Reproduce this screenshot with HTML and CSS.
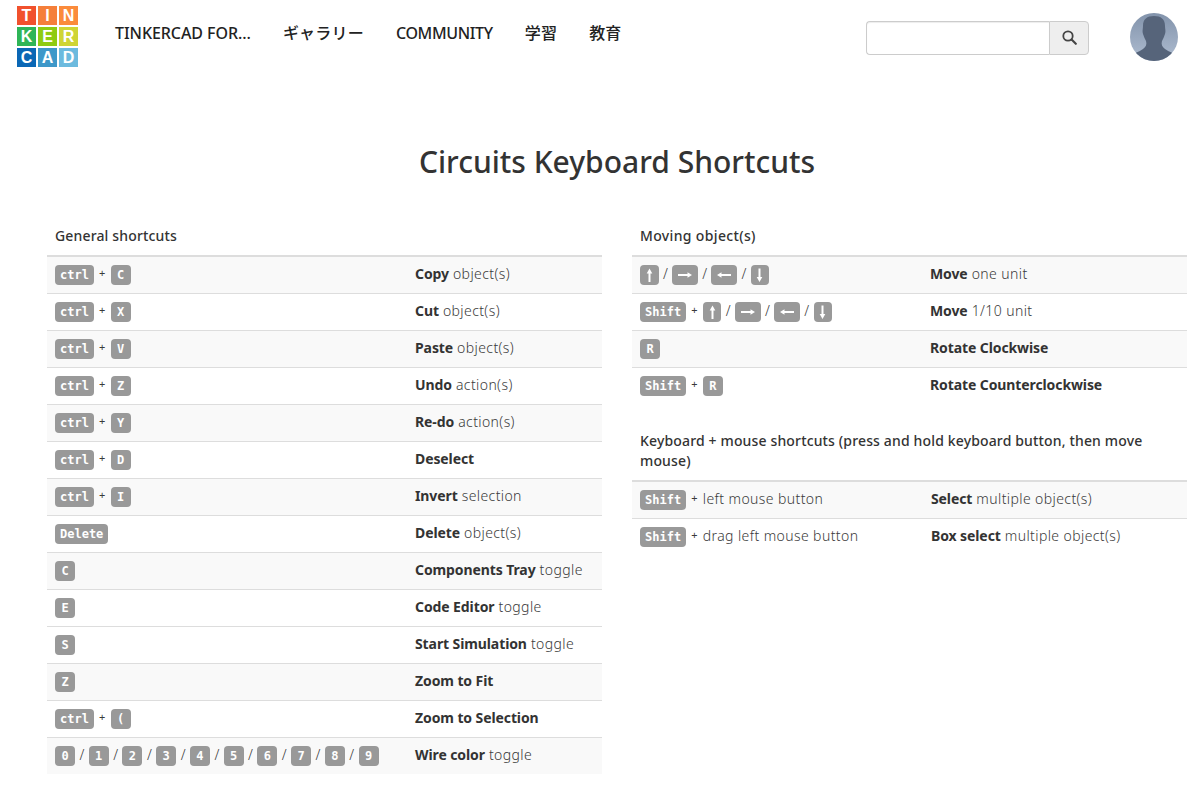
FILE: index.html
```html
<!DOCTYPE html>
<html lang="ja">
<head>
<meta charset="utf-8">
<title>Circuits Keyboard Shortcuts</title>
<link rel="stylesheet" href="styles.css">
</head>
<body>
<svg class="defs" width="0" height="0" aria-hidden="true">
  <symbol id="up" viewBox="0 0 7 20"><path d="M3.5 3.5L6.3 8.5H4.5V17H2.5V8.5H.7z" fill="#fff"/></symbol>
  <symbol id="down" viewBox="0 0 7 20"><path d="M3.5 17L6.3 12H4.5V3.5H2.5V12H.7z" fill="#fff"/></symbol>
  <symbol id="right" viewBox="0 0 14 20"><path d="M14 10L9.5 7.2V9H0V11H9.5V12.8z" fill="#fff"/></symbol>
  <symbol id="left" viewBox="0 0 14 20"><path d="M0 10L4.5 7.2V9H14V11H4.5V12.8z" fill="#fff"/></symbol>
</svg>
<header class="topbar">
  <a class="logo" href="#">
    <span class="t1">T</span><span class="t2">I</span><span class="t3">N</span>
    <span class="t4">K</span><span class="t5">E</span><span class="t6">R</span>
    <span class="t7">C</span><span class="t8">A</span><span class="t9">D</span>
  </a>
  <nav class="nav">
    <a class="first" href="#">TINKERCAD FOR...</a>
    <a class="cjk" href="#">ギャラリー</a>
    <a class="tight" href="#">COMMUNITY</a>
    <a class="cjk" href="#">学習</a>
    <a class="cjk" href="#">教育</a>
  </nav>
  <form class="search">
    <input class="search-input" type="text">
    <button class="search-btn" type="button" aria-label="search">
      <svg class="search-icon" width="15" height="15" viewBox="0 0 15 15"><circle cx="6" cy="6" r="4.7" fill="none" stroke="#444" stroke-width="1.8"/><path d="M9.6 9.6l4.2 4.2" stroke="#444" stroke-width="2.1" stroke-linecap="round"/></svg>
    </button>
  </form>
  <svg class="avatar" width="48" height="48" viewBox="0 0 48 48">
    <defs>
      <linearGradient id="bg" x1="0" y1="0" x2="0" y2="1"><stop offset="0" stop-color="#8293ab"/><stop offset="1" stop-color="#afbdd1"/></linearGradient>
      <clipPath id="cp"><circle cx="24" cy="24" r="24"/></clipPath>
    </defs>
    <g clip-path="url(#cp)">
      <rect width="48" height="48" fill="url(#bg)"/>
      <path d="M24 3c7 0 11 3 11 10 0 3 1 5 0 8-1 3-2 5-3 7-1 3 0 6 3 8 4 3 9 4 13 7v5H0v-5c4-3 9-4 13-7 3-2 4-5 3-8-1-2-2-4-3-7-1-3 0-5 0-8 0-7 4-10 11-10z" fill="#56647a"/>
    </g>
  </svg>
</header>

<main class="page">
  <h1 class="title">Circuits Keyboard Shortcuts</h1>
  <div class="columns">
    <section class="col">
      <table class="sc">
        <colgroup><col class="c-left"><col></colgroup>
        <thead><tr><th colspan="2">General shortcuts</th></tr></thead>
        <tbody>
          <tr class="alt"><td><kbd>ctrl</kbd><i>+</i><kbd>C</kbd></td><td><b>Copy</b> object(s)</td></tr>
          <tr><td><kbd>ctrl</kbd><i>+</i><kbd>X</kbd></td><td><b>Cut</b> object(s)</td></tr>
          <tr class="alt"><td><kbd>ctrl</kbd><i>+</i><kbd>V</kbd></td><td><b>Paste</b> object(s)</td></tr>
          <tr><td><kbd>ctrl</kbd><i>+</i><kbd>Z</kbd></td><td><b>Undo</b> action(s)</td></tr>
          <tr class="alt"><td><kbd>ctrl</kbd><i>+</i><kbd>Y</kbd></td><td><b>Re-do</b> action(s)</td></tr>
          <tr><td><kbd>ctrl</kbd><i>+</i><kbd>D</kbd></td><td><b>Deselect</b></td></tr>
          <tr class="alt"><td><kbd>ctrl</kbd><i>+</i><kbd>I</kbd></td><td><b>Invert</b> selection</td></tr>
          <tr><td><kbd>Delete</kbd></td><td><b>Delete</b> object(s)</td></tr>
          <tr class="alt"><td><kbd>C</kbd></td><td><b>Components Tray</b> toggle</td></tr>
          <tr><td><kbd>E</kbd></td><td><b>Code Editor</b> toggle</td></tr>
          <tr><td><kbd>S</kbd></td><td><b>Start Simulation</b> toggle</td></tr>
          <tr class="alt"><td><kbd>Z</kbd></td><td><b>Zoom to Fit</b></td></tr>
          <tr><td><kbd>ctrl</kbd><i>+</i><kbd>(</kbd></td><td><b>Zoom to Selection</b></td></tr>
          <tr class="alt"><td><kbd>0</kbd><u>/</u><kbd>1</kbd><u>/</u><kbd>2</kbd><u>/</u><kbd>3</kbd><u>/</u><kbd>4</kbd><u>/</u><kbd>5</kbd><u>/</u><kbd>6</kbd><u>/</u><kbd>7</kbd><u>/</u><kbd>8</kbd><u>/</u><kbd>9</kbd></td><td><b>Wire color</b> toggle</td></tr>
        </tbody>
      </table>
    </section>
    <section class="col">
      <table class="sc">
        <colgroup><col class="c-right-a"><col></colgroup>
        <thead><tr><th class="spaced" colspan="2">Moving object(s)</th></tr></thead>
        <tbody>
          <tr class="alt"><td><kbd class="arr"><svg class="av"><use href="#up"/></svg></kbd><u>/</u><kbd class="arr"><svg class="ah"><use href="#right"/></svg></kbd><u>/</u><kbd class="arr"><svg class="ah"><use href="#left"/></svg></kbd><u>/</u><kbd class="arr"><svg class="av"><use href="#down"/></svg></kbd></td><td><b>Move</b> one unit</td></tr>
          <tr><td><kbd>Shift</kbd><i>+</i><kbd class="arr"><svg class="av"><use href="#up"/></svg></kbd><u>/</u><kbd class="arr"><svg class="ah"><use href="#right"/></svg></kbd><u>/</u><kbd class="arr"><svg class="ah"><use href="#left"/></svg></kbd><u>/</u><kbd class="arr"><svg class="av"><use href="#down"/></svg></kbd></td><td><b>Move</b> 1/10 unit</td></tr>
          <tr class="alt"><td><kbd>R</kbd></td><td><b>Rotate Clockwise</b></td></tr>
          <tr><td><kbd>Shift</kbd><i>+</i><kbd>R</kbd></td><td><b>Rotate Counterclockwise</b></td></tr>
        </tbody>
      </table>
      <table class="sc lower">
        <colgroup><col class="c-right-b"><col></colgroup>
        <thead><tr><th colspan="2">Keyboard + mouse shortcuts (press and hold keyboard button, then move mouse)</th></tr></thead>
        <tbody>
          <tr class="alt"><td><kbd>Shift</kbd><i>+</i>left mouse button</td><td><b>Select</b> multiple object(s)</td></tr>
          <tr><td><kbd>Shift</kbd><i>+</i>drag left mouse button</td><td><b>Box select</b> multiple object(s)</td></tr>
        </tbody>
      </table>
    </section>
  </div>
</main>
</body>
</html>
```
FILE: styles.css
```css
* { box-sizing: border-box; }
html, body { margin: 0; padding: 0; }
body {
  background: #fff;
  color: #333;
  font-family: "Noto Sans", "Noto Sans CJK JP", sans-serif;
  font-size: 14px;
  line-height: 20px;
  overflow: hidden;
  height: 811px;
}
.defs { display: block; height: 0; }
.topbar {
  display: flex;
  align-items: flex-start;
  height: 78px;
  padding: 6px 22px 0 17px;
}
.logo {
  display: grid;
  grid-template-columns: repeat(3, 19px);
  grid-auto-rows: 19px;
  gap: 2px;
  flex: none;
  text-decoration: none;
}
.logo span {
  display: flex;
  align-items: center;
  justify-content: center;
  color: #fff;
  font: bold 16px/19px "Liberation Sans", sans-serif;
}
.t1 { background: #f1512d; }
.t2 { background: #f57f3a; }
.t3 { background: #fb8b3b; }
.t4 { background: #2fb557; }
.t5 { background: #8fcb12; }
.t6 { background: #cfd534; }
.t7 { background: #0a67b5; }
.t8 { background: #3e98c9; }
.t9 { background: #6cbade; }
.nav {
  display: flex;
  gap: 32px;
  margin: 16px 0 0 37px;
  flex: 1;
}
.nav a {
  color: #222;
  font-size: 16px;
  font-weight: 500;
  line-height: 22px;
  text-decoration: none;
  white-space: nowrap;
}
.nav .first { letter-spacing: -.06px; }
.nav .tight { letter-spacing: -.35px; }
.nav .cjk { letter-spacing: .2px; }
.search {
  display: flex;
  width: 223px;
  height: 34px;
  margin-top: 15px;
  flex: none;
}
.search-input {
  flex: 1;
  min-width: 0;
  border: 1px solid #ccc;
  border-right: 0;
  border-radius: 4px 0 0 4px;
  background: #fff;
  box-shadow: inset 0 1px 1px rgba(0,0,0,.075);
}
.search-btn {
  display: flex;
  align-items: center;
  justify-content: center;
  width: 40px;
  padding: 0;
  background: #eee;
  border: 1px solid #ccc;
  border-radius: 0 4px 4px 0;
}
.search-icon { margin-bottom: 2px; }
.avatar {
  flex: none;
  margin: 7px 0 0 41px;
}
.page { padding: 0 13px 0 47px; }
.title {
  margin: 66px 0 0;
  text-align: center;
  font-size: 30px;
  line-height: 36px;
  font-weight: 500;
  color: #333;
}
.columns {
  display: grid;
  grid-template-columns: 555px 555px;
  gap: 30px;
  margin-top: 38px;
}
.sc {
  width: 100%;
  border-collapse: collapse;
  table-layout: fixed;
}
.c-left { width: 360px; }
.c-right-a { width: 290px; }
.c-right-b { width: 291px; }
.sc th {
  padding: 8px 8px 9px;
  text-align: left;
  font-weight: 500;
  letter-spacing: .15px;
  color: #333;
  border-bottom: 2px solid #ddd;
}
.sc th.spaced { letter-spacing: .35px; }
.sc td {
  height: 37px;
  padding: 7px 8px;
  border-top: 1px solid #ddd;
  vertical-align: top;
  white-space: nowrap;
  font-weight: 300;
  letter-spacing: .4px;
  color: #3a3a3a;
}
.sc thead + tbody tr:first-child td { border-top: 0; }
.sc .alt { background: #f9f9f9; }
.lower { margin-top: 19px; }
.sc b {
  font-weight: 700;
  letter-spacing: -.1px;
  color: #333;
}
kbd {
  display: inline-block;
  min-width: 20px;
  height: 20px;
  margin-top: 1px;
  padding: 0 5px;
  border-radius: 4px;
  background: #999;
  color: #fff;
  font: bold 12px/20px "DejaVu Sans Mono", monospace;
  letter-spacing: 0;
  text-align: center;
  vertical-align: top;
}
kbd.arr {
  display: inline-flex;
  min-width: 0;
  padding: 0 5.75px;
}
.av { display: block; width: 7px; height: 20px; }
.ah { display: block; width: 14px; height: 20px; }
td i {
  font-style: normal;
  font-size: 11px;
  font-weight: 400;
  padding: 0 5.2px;
  vertical-align: top;
  line-height: 18px;
  letter-spacing: 0;
}
td u {
  text-decoration: none;
  padding: 0 4.44px;
  letter-spacing: 0;
}
```
